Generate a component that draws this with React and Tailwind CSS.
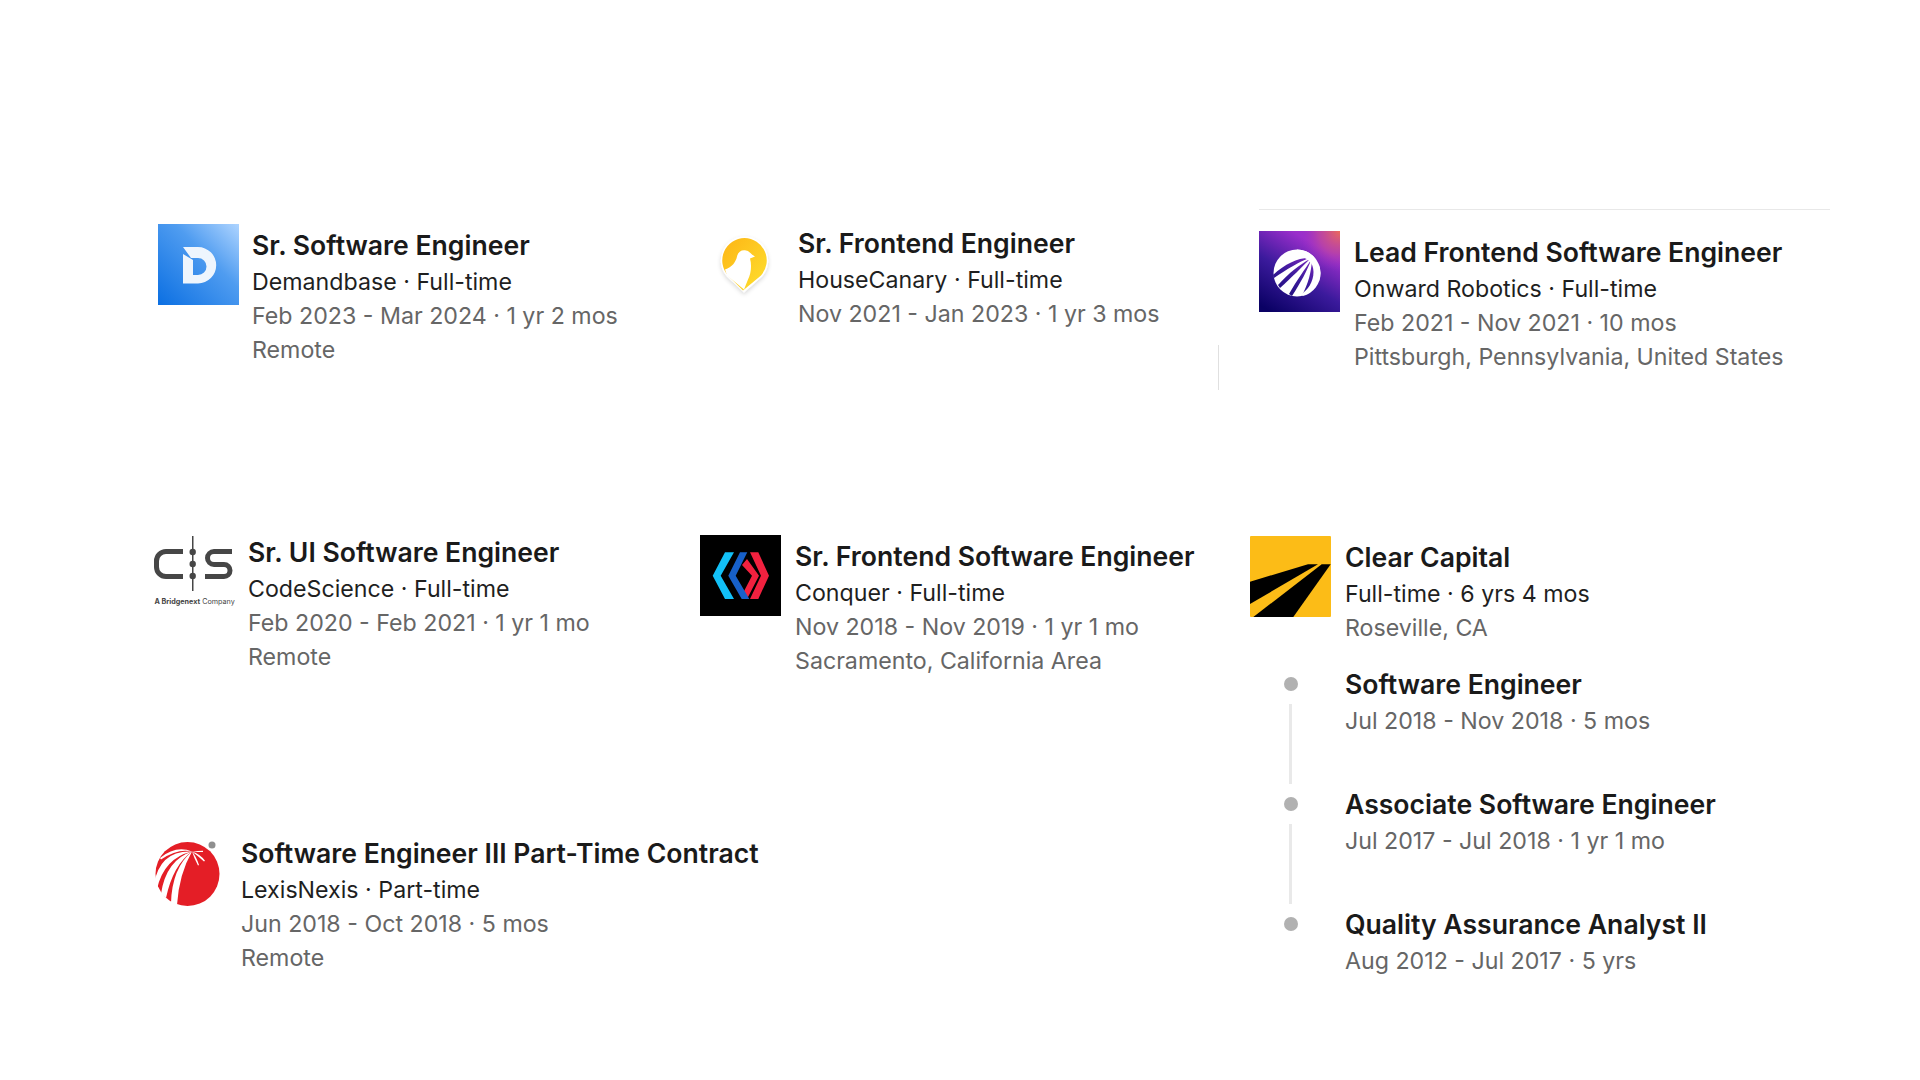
import React from "react";

const DemandbaseLogo = () => (
  <svg width="81" height="81" viewBox="0 0 81 81">
    <defs>
      <linearGradient id="dbg" x1="0" y1="1" x2="1" y2="0">
        <stop offset="0" stopColor="#0b6fe2" />
        <stop offset="0.6" stopColor="#4f9cf0" />
        <stop offset="1" stopColor="#aed4ff" />
      </linearGradient>
    </defs>
    <rect width="81" height="81" fill="url(#dbg)" />
    <path
      d="M25 23H40A18.200 18.200 0 0 1 40 59.400H25V30L35 36V51H40A8.500 8.500 0 0 0 40 34H33Z"
      fill="#eef5fd"
    />
  </svg>
);

const CanaryLogo = () => (
  <svg width="81" height="81" viewBox="0 0 81 81">
    <defs>
      <linearGradient id="cng" x1="0" y1="0" x2="1" y2="1">
        <stop offset="0" stopColor="#fdb515" />
        <stop offset="1" stopColor="#fee02f" />
      </linearGradient>
      <filter id="cns" x="-30%" y="-30%" width="160%" height="160%">
        <feDropShadow dx="0" dy="2" stdDeviation="2" floodColor="#000" floodOpacity="0.16" />
      </filter>
    </defs>
    <g transform="translate(0 -1.500)">
      <path
        d="M40.500 16A24 24 0 0 1 58 56L40 72L23 56A24 24 0 0 1 40.500 16Z"
        fill="#fff"
        filter="url(#cns)"
      />
      <path
        d="M40.500 17.500A22.500 22.500 0 0 1 57 55L39 70L24 55A22.500 22.500 0 0 1 40.500 17.500Z"
        fill="url(#cng)"
      />
      <path
        d="M21 49C28 47 32 41 33 36C34 31 38 29 42 30C45 30 47 34 51 36L46 38C48 45 47 53 44 59L40 69L23 55Z"
        fill="#fff"
      />
    </g>
  </svg>
);

const OnwardLogo = () => (
  <svg width="81" height="81" viewBox="0 0 81 81">
    <defs>
      <radialGradient id="onr" cx="1" cy="0" r="0.5">
        <stop offset="0" stopColor="#ec6a5a" />
        <stop offset="0.55" stopColor="#c44a9a" stopOpacity="0.7" />
        <stop offset="1" stopColor="#9a2ecb" stopOpacity="0" />
      </radialGradient>
      <linearGradient id="onl" x1="0.15" y1="1" x2="0.75" y2="0">
        <stop offset="0" stopColor="#0a0164" />
        <stop offset="0.45" stopColor="#3b1a9c" />
        <stop offset="0.85" stopColor="#9a2ecb" />
        <stop offset="1" stopColor="#9a2ecb" />
      </linearGradient>
      <mask id="onm">
        <rect width="81" height="81" fill="#000" />
        <circle cx="38" cy="42" r="23.500" fill="#fff" />
        <path d="M50 27C38 27 26 33 14 44L15 47C28 38 40 31 50 27Z" fill="#000" />
        <path d="M51 28C40 34 30 42 19 54L21 57C33 46 43 36 51 28Z" fill="#000" />
        <path d="M52 29C46 38 38 49 30 63L33 65C42 51 48 40 52 29Z" fill="#000" />
        <path d="M53 29C52 41 50 52 42 66L60 62V28Z" fill="#000" />
        <path d="M38 18.500A23.500 23.500 0 0 1 61.500 42A23.500 23.500 0 0 1 44 65L41 64C49 59 54.500 51 54.500 41C54.500 32 49 26 38 25Z" fill="#fff" />
      </mask>
    </defs>
    <rect width="81" height="81" fill="url(#onl)" />
    <rect width="81" height="81" fill="url(#onr)" />
    <rect width="81" height="81" fill="#fff" mask="url(#onm)" />
  </svg>
);

const CodeScienceLogo = () => (
  <svg width="81" height="81" viewBox="0 0 81 81">
    <g fill="none" stroke="#464646" strokeWidth="5">
      <path d="M29 20.500H12A9.500 9.500 0 0 0 2.500 30V36A9.500 9.500 0 0 0 12 45.500H29" />
      <path d="M78 20.500H60A6.500 6.500 0 0 0 60 33.500H70A6 6 0 0 1 70 45.500H51" />
    </g>
    <rect x="38" y="5" width="1.500" height="55" fill="#464646" />
    <circle cx="38.700" cy="21" r="3.200" fill="#464646" />
    <circle cx="38.700" cy="33" r="3.200" fill="#464646" />
    <circle cx="38.700" cy="45" r="3.200" fill="#464646" />
    <text x="0.500" y="73" fontSize="7.200" fontFamily="Inter, sans-serif" fill="#444">
      <tspan fontWeight="700">A Bridgenext</tspan> Company
    </text>
  </svg>
);

const ConquerLogo = () => (
  <svg width="81" height="81" viewBox="0 0 81 81">
    <rect width="81" height="81" fill="#000" />
    <path d="M25 17.300H34L20.700 40.700L34 64H25L12.700 40.700Z" fill="#12c0f7" />
    <path d="M42 30L52 40.700L42 60L47 64L59 40.700L47 24Z" fill="#f2213f" />
    <path d="M40 17.300H47.300L35.700 40.700L49.300 64H41.700L28.300 40.700Z" fill="#1760c9" />
    <path d="M50 17.300H58.300L69 40.700L58.300 64H50L61 40.700Z" fill="#f2213f" />
  </svg>
);

const ClearCapitalLogo = () => (
  <svg width="81" height="81" viewBox="0 0 81 81">
    <rect width="81" height="81" rx="1" fill="#fcbc17" />
    <path d="M0 45.700L58 28.300H68L0 68Z" fill="#000" />
    <path d="M3.300 81L71.700 28.300H80.700L43.300 81Z" fill="#000" />
  </svg>
);

const LexisLogo = () => (
  <svg width="81" height="81" viewBox="0 0 81 81">
    <circle cx="41.500" cy="42" r="32" fill="#e41e26" />
    <g fill="#fff">
      <path d="M46 19.500Q14 18 8 52L11 57Q18 26 46 19.500Z" />
      <path d="M46 19.500Q20 28 15 62L20 66Q27 33 46 19.500Z" />
      <path d="M46 19.500Q26 36 25 71L31 73Q33 42 46 19.500Z" />
      <path d="M46 19.500Q30 13 14 26L15 27.500Q32 16 46 19.500Z" />
      <path d="M46 19.500Q52 19 57 18.700L57 20Q52 20 46 19.500Z" />
      <path d="M46 19.500Q54 22 59 28.700L58 29.500Q52 24 46 19.500Z" />
      <path d="M46 19.500Q50 24 53 33L52 33.500Q48 26 46 19.500Z" />
    </g>
    <circle cx="66" cy="13" r="3.500" fill="#8f8f8f" />
  </svg>
);

const Entry = ({ logo, title, lines, className }) => (
  <div className={`flex items-start ${className}`}>
    <div className="w-[81px] h-[81px] shrink-0">{logo}</div>
    <div className="mt-px">
      <h3 className="text-[26.6px] leading-[40px] font-semibold text-[#1a1a1a] whitespace-nowrap">{title}</h3>
      <p className="text-[23.2px] leading-[34px] text-[#1f1f1f] whitespace-nowrap">{lines[0]}</p>
      {lines.slice(1).map((line) => (
        <p key={line} className="text-[23.2px] leading-[34px] text-[#666666] whitespace-nowrap">
          {line}
        </p>
      ))}
    </div>
  </div>
);

const roles = [
  { title: "Software Engineer", date: "Jul 2018 - Nov 2018 · 5 mos" },
  { title: "Associate Software Engineer", date: "Jul 2017 - Jul 2018 · 1 yr 1 mo" },
  { title: "Quality Assurance Analyst II", date: "Aug 2012 - Jul 2017 · 5 yrs" },
];

const App = () => {
  return (
    <div className="flex w-[1920px] h-[1080px] overflow-hidden bg-white font-['Inter',sans-serif]">
      <div className="w-[700px] shrink-0 flex flex-col">
        <Entry
          className="gap-[13px] ml-[158px] mt-[224px]"
          logo={<DemandbaseLogo />}
          title="Sr. Software Engineer"
          lines={["Demandbase · Full-time", "Feb 2023 - Mar 2024 · 1 yr 2 mos", "Remote"]}
        />
        <Entry
          className="gap-[13px] ml-[154px] mt-[164px]"
          logo={<CodeScienceLogo />}
          title="Sr. UI Software Engineer"
          lines={["CodeScience · Full-time", "Feb 2020 - Feb 2021 · 1 yr 1 mo", "Remote"]}
        />
        <Entry
          className="gap-[14px] ml-[146px] mt-[158px]"
          logo={<LexisLogo />}
          title="Software Engineer III Part-Time Contract"
          lines={["LexisNexis · Part-time", "Jun 2018 - Oct 2018 · 5 mos", "Remote"]}
        />
      </div>

      <div className="w-[550px] shrink-0 flex flex-col">
        <Entry
          className="gap-[13px] ml-[4px] mt-[222px]"
          logo={<CanaryLogo />}
          title="Sr. Frontend Engineer"
          lines={["HouseCanary · Full-time", "Nov 2021 - Jan 2023 · 1 yr 3 mos"]}
        />
        <div className="ml-[518px] mt-[14px] w-px h-[45px] bg-[#e0e0e0]" />
        <Entry
          className="gap-[14px] mt-[145px]"
          logo={<ConquerLogo />}
          title="Sr. Frontend Software Engineer"
          lines={["Conquer · Full-time", "Nov 2018 - Nov 2019 · 1 yr 1 mo", "Sacramento, California Area"]}
        />
      </div>

      <div className="flex-1 flex flex-col">
        <div className="ml-[9px] mt-[209px] w-[571px] h-px bg-[#e8e8e8]" />
        <Entry
          className="gap-[14px] ml-[9px] mt-[21px]"
          logo={<OnwardLogo />}
          title="Lead Frontend Software Engineer"
          lines={["Onward Robotics · Full-time", "Feb 2021 - Nov 2021 · 10 mos", "Pittsburgh, Pennsylvania, United States"]}
        />
        <Entry
          className="gap-[14px] mt-[162px]"
          logo={<ClearCapitalLogo />}
          title="Clear Capital"
          lines={["Full-time · 6 yrs 4 mos", "Roseville, CA"]}
        />
        <div className="mt-[19px] flex flex-col">
          {roles.map((role, idx) => (
            <div key={role.title} className="flex gap-[14px]">
              <div className="w-[81px] shrink-0 flex flex-col items-center">
                <div className="mt-[13px] w-[14px] h-[14px] rounded-full bg-[#b1b1b1]" />
                {idx < roles.length - 1 && <div className="mt-[13px] w-[3px] h-[80px] bg-[#e9e9e9]" />}
              </div>
              <div>
                <h4 className="text-[26.6px] leading-[40px] font-semibold text-[#1a1a1a] whitespace-nowrap">{role.title}</h4>
                <p className="text-[23.2px] leading-[34px] text-[#666666] whitespace-nowrap">{role.date}</p>
              </div>
            </div>
          ))}
        </div>
      </div>
    </div>
  );
};

export default App;
